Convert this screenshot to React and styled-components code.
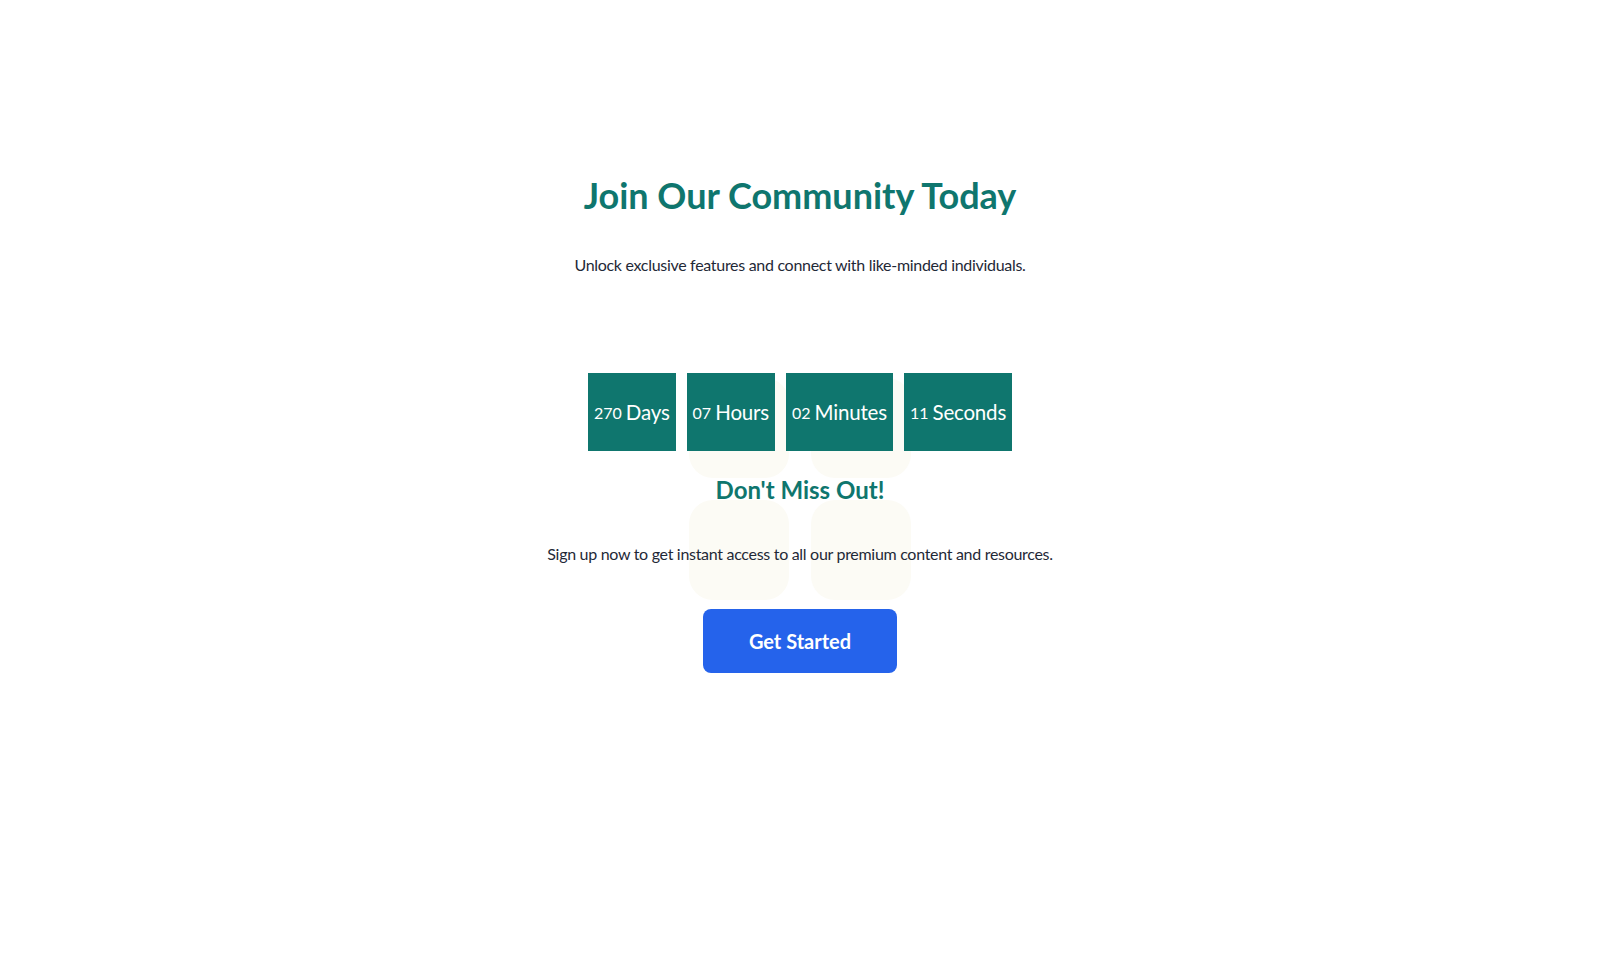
import React from 'react';
import styled, {createGlobalStyle} from 'styled-components';

const GlobalStyle = createGlobalStyle`
  body {
    margin: 0;
    background: #ffffff;
    font-family: "Lato", "Noto Sans", sans-serif;
  }
`

const Page = styled.main`
  position: relative;
  min-height: 978px;
  display: flex;
  flex-direction: column;
  align-items: center;
  padding-top: 174px;
  box-sizing: border-box;
`
const Title = styled.h1`
  margin: 0;
  font-size: 36px;
  line-height: 43px;
  font-weight: 700;
  color: #0f766e;
  position: relative;
`
const Lead = styled.p`
  margin: 36px 0 0;
  font-size: 16px;
  line-height: 24px;
  letter-spacing: -0.3px;
  color: #1f2937;
  position: relative;
`
const Countdown = styled.div`
  margin-top: 96px;
  display: flex;
  gap: 11px;
  position: relative;
  z-index: 1;
`
const TimeBox = styled.div`
  background: #0f766e;
  color: #ffffff;
  height: 78px;
  padding: 0 6px;
  display: flex;
  align-items: center;
  white-space: pre;
`
const Num = styled.span`
  font-size: 16px;
`
const Unit = styled.span`
  font-size: 20.5px;
  letter-spacing: -0.2px;
`
const SubTitle = styled.h2`
  margin: 24px 0 0;
  font-size: 24px;
  line-height: 29px;
  font-weight: 700;
  color: #0f766e;
  position: relative;
  z-index: 1;
`
const Note = styled.p`
  margin: 38px 0 0;
  font-size: 16px;
  line-height: 24px;
  letter-spacing: -0.3px;
  color: #1f2937;
  position: relative;
  z-index: 1;
`
const Button = styled.button`
  margin-top: 43px;
  width: 194px;
  height: 64px;
  border: none;
  border-radius: 8px;
  background: #2563eb;
  color: #ffffff;
  font-family: inherit;
  font-size: 20px;
  font-weight: 700;
  cursor: pointer;
  position: relative;
  z-index: 1;
`
const Deco = styled.div`
  position: absolute;
  left: 689px;
  top: 378px;
  display: grid;
  grid-template-columns: 100px 100px;
  grid-auto-rows: 100px;
  gap: 22px;
  z-index: 0;
`
const DecoTile = styled.div`
  background: #fcfbf5;
  border-radius: 24px;
`

const units = [
  {n: '270', label: 'Days'},
  {n: '07', label: 'Hours'},
  {n: '02', label: 'Minutes'},
  {n: '11', label: 'Seconds'},
];

const App = () => {
  return (
    <Page>
      <GlobalStyle />
      <Deco>
        <DecoTile /><DecoTile /><DecoTile /><DecoTile />
      </Deco>
      <Title>Join Our Community Today</Title>
      <Lead>Unlock exclusive features and connect with like-minded individuals.</Lead>
      <Countdown>
        {units.map(u => (
          <TimeBox key={u.label}>
            <Num>{u.n} </Num><Unit>{u.label}</Unit>
          </TimeBox>
        ))}
      </Countdown>
      <SubTitle>Don't Miss Out!</SubTitle>
      <Note>Sign up now to get instant access to all our premium content and resources.</Note>
      <Button>Get Started</Button>
    </Page>
  )
}

export default App;
